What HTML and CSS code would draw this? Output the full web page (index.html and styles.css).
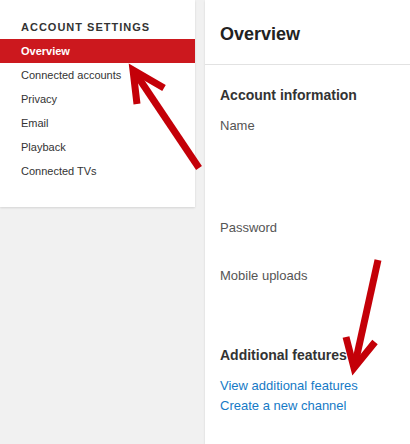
FILE: index.html
```html
<!DOCTYPE html>
<html>
<head>
<meta charset="utf-8">
<link rel="stylesheet" href="styles.css">
</head>
<body>
<div class="page">
  <nav class="side">
    <div class="side-title">ACCOUNT SETTINGS</div>
    <ul class="side-list">
      <li class="side-item active">Overview</li>
      <li class="side-item">Connected accounts</li>
      <li class="side-item">Privacy</li>
      <li class="side-item">Email</li>
      <li class="side-item">Playback</li>
      <li class="side-item">Connected TVs</li>
    </ul>
  </nav>
  <main class="main">
    <header class="main-head"><h1 class="main-title">Overview</h1></header>
    <section class="section">
      <h2 class="sec-title">Account information</h2>
      <div class="field field-name">Name</div>
      <div class="field field-pass">Password</div>
      <div class="field field-mobile">Mobile uploads</div>
      <h2 class="sec-title">Additional features</h2>
      <div class="links">
        <a class="link" href="#">View additional features</a>
        <a class="link" href="#">Create a new channel</a>
      </div>
    </section>
  </main>
</div>
<svg class="arrows" width="410" height="444" viewBox="0 0 410 444">
  <g fill="none" stroke="#c40008" stroke-width="7" stroke-linejoin="miter" stroke-miterlimit="10">
    <line x1="199" y1="168" x2="136" y2="74"/>
    <polyline points="137,104 133,70 164,88"/>
    <line x1="378" y1="260" x2="355" y2="364"/>
    <polyline points="346,337 354,368 375,342"/>
  </g>
</svg>
</body>
</html>
```
FILE: styles.css
```css
html, body {
  margin: 0;
  padding: 0;
}
body {
  background: #f1f1f1;
  font-family: "Liberation Sans", Arial, sans-serif;
  width: 410px;
  height: 444px;
  overflow: hidden;
  position: relative;
}
.page {
  display: flex;
  gap: 10px;
  align-items: flex-start;
  height: 444px;
}
.side {
  width: 195px;
  flex: none;
  background: #fff;
  box-shadow: 0 1px 2px rgba(0,0,0,.12);
  padding: 15px 0 24px;
}
.side-title {
  font-size: 11px;
  font-weight: bold;
  letter-spacing: 1px;
  color: #333;
  line-height: 24px;
  padding-left: 21px;
}
.side-list {
  list-style: none;
  margin: 0;
  padding: 0;
}
.side-item {
  font-size: 11px;
  line-height: 24px;
  height: 24px;
  padding-left: 21px;
  color: #333;
}
.side-item.active {
  background: #cc181e;
  color: #fff;
  font-weight: bold;
}
.main {
  flex: 1;
  align-self: stretch;
  background: #fff;
  box-shadow: 0 1px 2px rgba(0,0,0,.12);
}
.main-head {
  height: 65px;
  border-bottom: 1px solid #e2e2e2;
  display: flex;
  align-items: center;
  padding: 4px 15px 0;
  box-sizing: border-box;
}
.main-title {
  margin: 0;
  font-size: 18px;
  font-weight: bold;
  color: #222;
}
.section {
  padding: 21px 15px 0;
}
.sec-title {
  margin: 0;
  font-size: 14px;
  font-weight: bold;
  line-height: 18px;
  color: #333;
}
.field {
  font-size: 13px;
  line-height: 18px;
  color: #555;
}
.field-name {
  margin-top: 13px;
  height: 102px;
}
.field-pass {
  height: 48px;
}
.field-mobile {
  height: 79px;
}
.links {
  display: flex;
  flex-direction: column;
  margin-top: 12px;
}
.link {
  font-size: 13px;
  line-height: 20px;
  color: #167ac6;
  text-decoration: none;
}
.arrows {
  position: absolute;
  left: 0;
  top: 0;
  pointer-events: none;
}
```
